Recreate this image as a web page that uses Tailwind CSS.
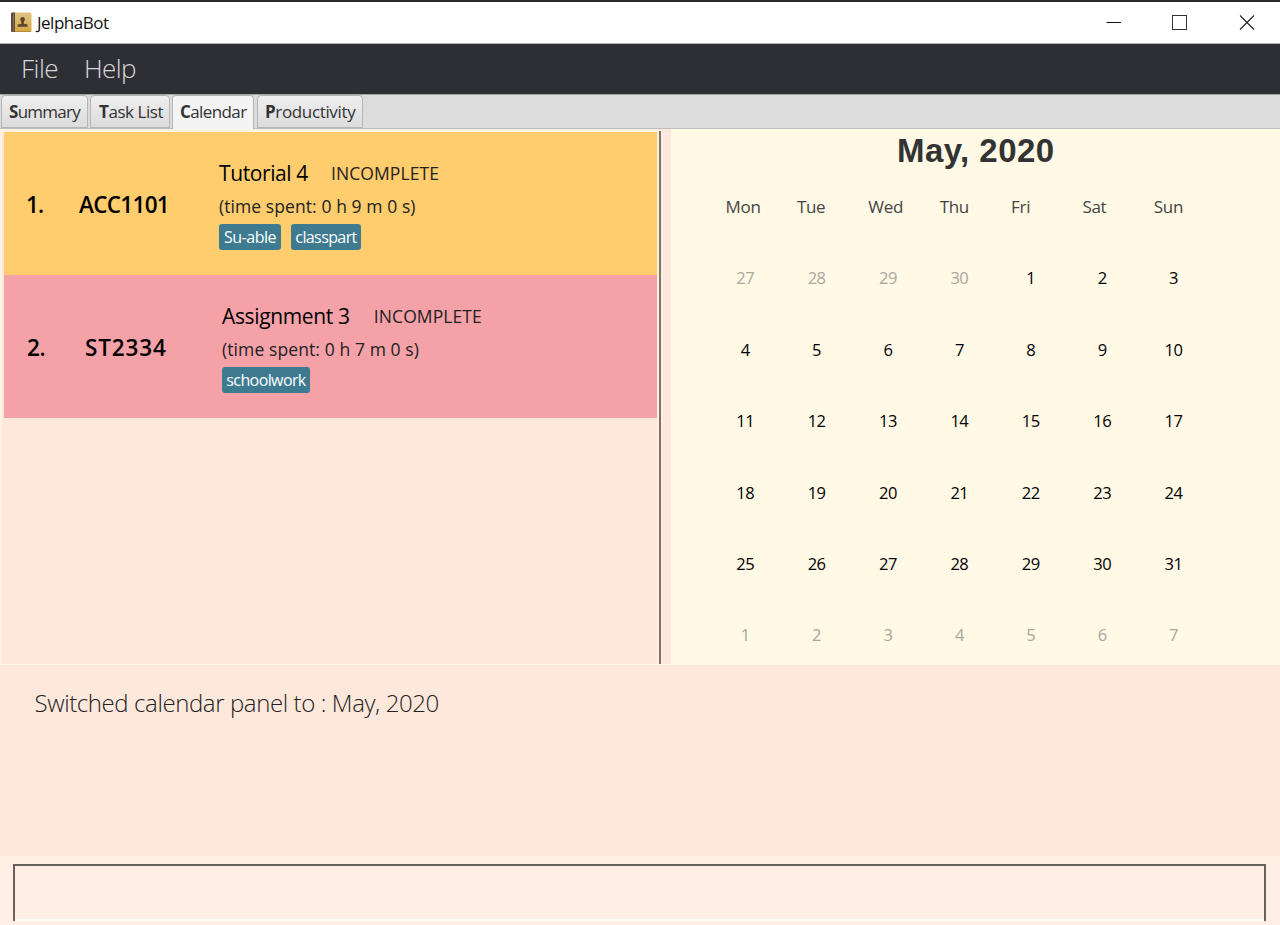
<!DOCTYPE html>
<html lang="en">
<head>
<meta charset="utf-8">
<title>JelphaBot</title>
<script src="https://cdn.jsdelivr.net/npm/@tailwindcss/browser@4"></script>
</head>
<body class="flex h-[925px] w-[1280px] flex-col overflow-hidden bg-[#fee8db] font-['Open_Sans','Noto_Sans',sans-serif] text-black whitespace-nowrap">
<div class="h-[2px] shrink-0 bg-[#2b2a2b]"></div>
<header class="flex h-[42px] shrink-0 items-center border-b border-[#b5b5b5] bg-white pl-[10px]">
  <svg class="h-[21px] w-[22px]" viewBox="0 0 22 21">
    <defs><linearGradient id="cover" x1="0" y1="0" x2="0" y2="1"><stop offset="0" stop-color="#dfc384"/><stop offset="1" stop-color="#d6a643"/></linearGradient></defs>
    <rect x="1" y="0.5" width="20.5" height="19.5" rx="1.5" fill="url(#cover)"/>
    <path d="M1 1.5Q1 .5 2.5 .5H5V20H2.5Q1 20 1 18.5Z" fill="#5d4c3c"/>
    <path d="M3.5 .5V20" stroke="#8b7964" stroke-width=".8"/>
    <path d="M5 19.5H21" stroke="#b68b3d"/>
    <path d="M12.600 5c1.500 0 2.300 1 2.300 2.300 0 1.200-.6 2.100-1.100 2.700v1.700l3.700 .9v2.200H7.700v-2.200l3.700-.9V10c-.5-.6-1.100-1.500-1.100-2.700C10.300 6 11.100 5 12.600 5Z" fill="#5b452c"/>
  </svg>
  <span class="ml-[5px] text-[17px] leading-[22px] tracking-[-0.5px] text-[#111]">JelphaBot</span>
  <div class="mr-[25px] ml-auto flex items-center gap-[51px]">
    <svg class="h-4 w-4" viewBox="0 0 16 16"><path d="M1.500 7.500H16" stroke="#111"/></svg>
    <svg class="h-4 w-4" viewBox="0 0 16 16"><rect x="0.500" y="0.500" width="14" height="14" fill="none" stroke="#333"/></svg>
    <svg class="h-4 w-4" viewBox="0 0 16 16"><path d="M1 .5 15 14.500M15 .5 1 14.500" stroke="#222" stroke-width="1.100"/></svg>
  </div>
</header>
<nav class="flex h-[50px] shrink-0 items-center gap-[27px] bg-[#2e2f34] pb-[2px] pl-[21px] text-[26px] font-light text-[#d8d8d8]">
  <span class="w-[36px] tracking-[-0.500px]">File</span><span class="tracking-[-0.600px]">Help</span>
</nav>
<div class="flex h-[35px] shrink-0 items-end gap-[2px] border-t border-b border-t-[#a5a5a5] border-b-[#bdbdbd] bg-[#dcdcdc] pl-px text-[17px] text-[#333]">
  <div class="flex h-[33px] w-[87px] items-center rounded-t-sm border border-[#b5b5b5] bg-linear-to-b from-[#efefef] to-[#dcdcdc] pl-[7px] tracking-[-0.750px]"><span><b>S</b>ummary</span></div>
  <div class="flex h-[33px] w-[80px] items-center rounded-t-sm border border-[#b5b5b5] bg-linear-to-b from-[#efefef] to-[#dcdcdc] pl-[8px] tracking-[-0.450px]"><span><b>T</b>ask List</span></div>
  <div class="-mb-px flex h-[34px] w-[82px] items-center rounded-t-sm border border-b-0 border-[#b5b5b5] bg-[#f4f4f4] pb-px pl-[7px] tracking-[-0.6px]"><span><b>C</b>alendar</span></div>
  <div class="ml-px flex h-[33px] w-[106px] items-center rounded-t-sm border border-[#b5b5b5] bg-linear-to-b from-[#efefef] to-[#dcdcdc] pl-[7px] tracking-[-0.350px]"><span><b>P</b>roductivity</span></div>
</div>
<main class="flex h-[536px] shrink-0 border-b border-[#fff3e2] bg-[#fee8db]">
  <section class="flex w-[659px] flex-col border-x-2 border-t-[3px] border-[#fdf2e3] pl-[2px]">
    <article class="flex h-[143px] items-center bg-[#ffcc6e] pl-[22px]">
      <span class="w-[53px] pt-[2px] text-[22.500px] font-semibold tracking-[-0.8px]">1.</span>
      <span class="w-[140px] pt-[2px] text-[22.500px] font-semibold tracking-[-0.700px]">ACC1101</span>
      <div class="flex flex-col pb-px">
        <div class="flex h-[34px] items-center gap-[23px] pt-px"><span class="text-[21px] tracking-[-0.4px]">Tutorial 4</span><span class="text-[17.500px] tracking-[0.100px] text-[#222]">INCOMPLETE</span></div>
        <div class="flex h-[33px] items-center text-[17.500px] tracking-[0.080px] text-[#222]">(time spent: 0 h 9 m 0 s)</div>
        <div class="mt-px flex gap-[10px] text-[16px] text-white"><span class="flex h-[26px] w-[62px] items-center justify-center rounded-[3px] bg-[#3e7b91] tracking-[-0.500px]">Su-able</span><span class="flex h-[26px] w-[70px] items-center justify-center rounded-[3px] bg-[#3e7b91] tracking-[-0.600px]">classpart</span></div>
      </div>
    </article>
    <article class="flex h-[143px] items-center bg-[#f4a1a8] pl-[23px]">
      <span class="w-[58px] pt-[2px] text-[22.500px] font-semibold tracking-[-0.3px]">2.</span>
      <span class="w-[137px] pt-[2px] text-[22.500px] font-semibold tracking-[0.850px]">ST2334</span>
      <div class="flex flex-col pb-px">
        <div class="flex h-[34px] items-center gap-[24px] pt-px"><span class="text-[21px] tracking-[-0.350px]">Assignment 3</span><span class="text-[17.500px] tracking-[0.100px] text-[#222]">INCOMPLETE</span></div>
        <div class="flex h-[33px] items-center text-[17.500px] tracking-[0.100px] text-[#222]">(time spent: 0 h 7 m 0 s)</div>
        <div class="mt-px flex text-[16px] text-white"><span class="flex h-[26px] w-[88px] items-center justify-center rounded-[3px] bg-[#3e7b91] tracking-[-0.600px]">schoolwork</span></div>
      </div>
    </article>
  </section>
  <div class="mt-[2px] w-[2px] bg-[#81726c]"></div>
  <div class="w-[10px] border-l-2 border-[#fdf0e3]"></div>
  <section class="flex flex-1 flex-col overflow-hidden bg-[#fff9e6]">
    <h1 class="h-[42px] pl-[226px] text-[33px] leading-[43px] font-bold font-['Liberation_Sans',sans-serif] tracking-[0.450px] text-[#333]">May, 2020</h1>
    <div id="calendar" class="grid auto-rows-[71.4px] grid-cols-[repeat(7,71.4px)] items-center pl-[38.500px] text-[16.500px]"></div>
  </section>
</main>
<section class="h-[191px] shrink-0 bg-[#fee8db] pt-[20px] pl-[34.500px] text-[24px] leading-[36px] font-light tracking-[-0.400px] text-[#222]">Switched calendar panel to : May, 2020</section>
<footer class="flex-1 bg-[#ffefe4] px-[13px] pt-[8px]">
  <div class="h-[57px] w-[1253px] border-x-2 border-t-2 border-[#6a605b] bg-[#feeee5]"><div class="h-full border-b-2 border-[#fffaf6]"></div></div>
</footer>
<script>
const grid = document.getElementById('calendar');
const add = (text, cls) => { const d = document.createElement('div'); d.textContent = text; d.className = cls; grid.append(d); };
['Mon','Tue','Wed','Thu','Fri','Sat','Sun'].forEach(n => add(n, 'pl-[16px] text-[17px] tracking-[-0.3px] text-[#444]'));
for (let i = 0; i < 42; i++) {
  const n = i - 3, inside = n >= 1 && n <= 31;
  add(n < 1 ? n + 30 : n > 31 ? n - 31 : n, inside ? 'pt-[1.500px] text-center tracking-[-0.5px] text-black' : 'pt-[1.500px] text-center tracking-[-0.5px] text-[#aaa79c]');
}
</script>
</body>
</html>
